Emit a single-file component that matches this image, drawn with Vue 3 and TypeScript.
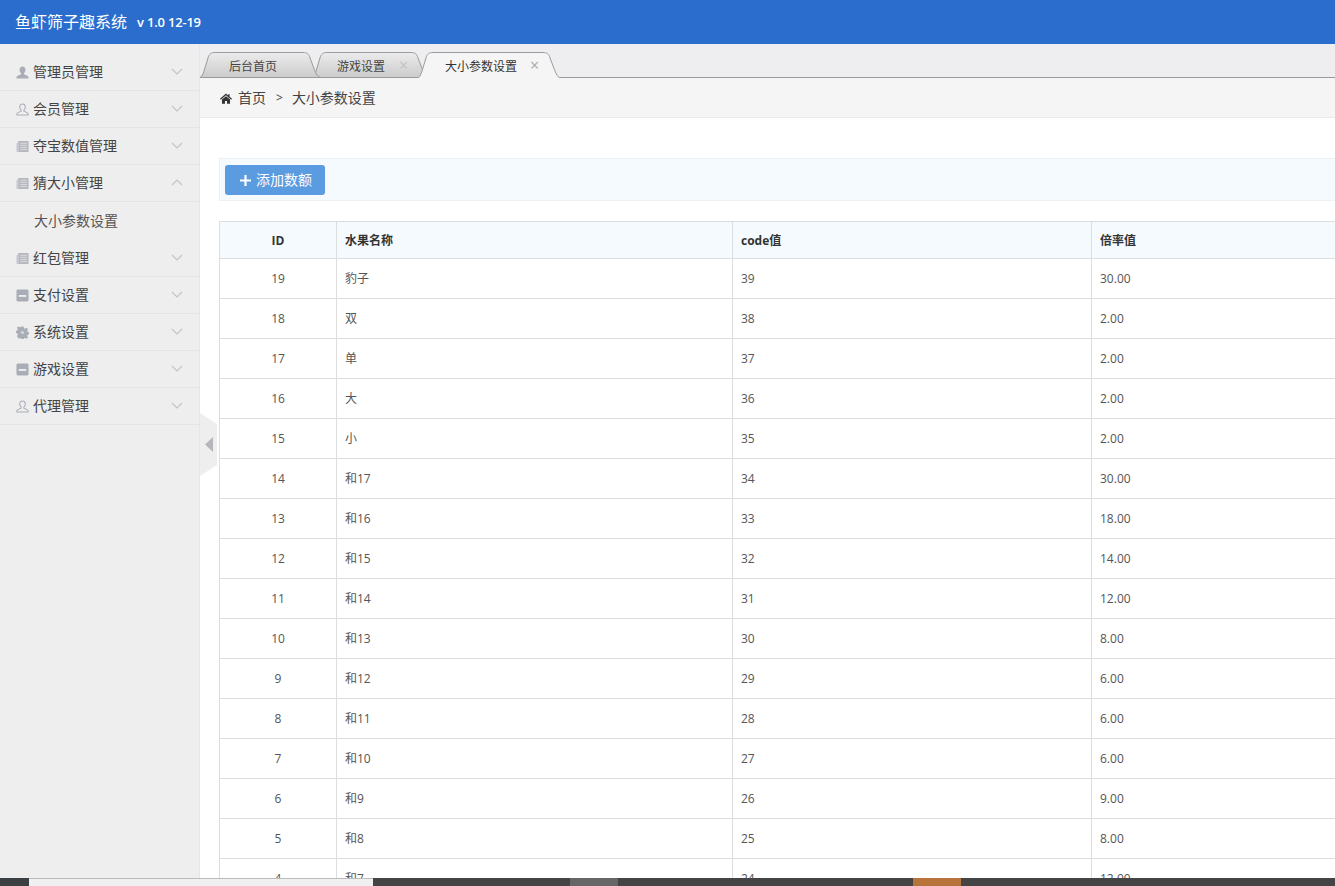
<script setup lang="ts">
type IconName = 'user' | 'outline' | 'news' | 'card' | 'cog'
interface MenuItem { label: string; icon: IconName; open?: boolean; children?: string[] }
const menu: MenuItem[] = [
  { label: '管理员管理', icon: 'user' },
  { label: '会员管理', icon: 'outline' },
  { label: '夺宝数值管理', icon: 'news' },
  { label: '猜大小管理', icon: 'news', open: true, children: ['大小参数设置'] },
  { label: '红包管理', icon: 'news' },
  { label: '支付设置', icon: 'card' },
  { label: '系统设置', icon: 'cog' },
  { label: '游戏设置', icon: 'card' },
  { label: '代理管理', icon: 'outline' },
]
const tabs = [
  { label: '后台首页', width: 120, closable: false, active: false, cls: 'tab-home' },
  { label: '游戏设置', width: 116, closable: true, active: false, cls: 'tab-game' },
  { label: '大小参数设置', width: 142, closable: true, active: true, cls: 'tab-size' },
]
function tabPath(w: number, active: boolean): string {
  const b = active ? 26 : 25.5
  const edge = `M0 ${b} C2 ${b - 1} 3 22 4 19 L8 6 C9 2 11 0.5 15 0.5 L${w - 17} 0.5 C${w - 13} 0.5 ${w - 11} 2 ${w - 10} 6 L${w - 5} 19 C${w - 4} 22 ${w - 2} ${b - 1} ${w} ${b}`
  return active ? edge : edge + ' Z'
}
const rows: [number, string, number, string][] = [
  [19, '豹子', 39, '30.00'], [18, '双', 38, '2.00'], [17, '单', 37, '2.00'], [16, '大', 36, '2.00'],
  [15, '小', 35, '2.00'], [14, '和17', 34, '30.00'], [13, '和16', 33, '18.00'], [12, '和15', 32, '14.00'],
  [11, '和14', 31, '12.00'], [10, '和13', 30, '8.00'], [9, '和12', 29, '6.00'], [8, '和11', 28, '6.00'],
  [7, '和10', 27, '6.00'], [6, '和9', 26, '9.00'], [5, '和8', 25, '8.00'], [4, '和7', 24, '12.00'],
]
</script>

<template>
  <div class="page">
    <header class="topbar">
      <span class="brand">鱼虾筛子趣系统</span>
      <span class="version">v 1.0 12-19</span>
    </header>
    <div class="shell">
      <aside class="sidebar">
        <template v-for="item in menu" :key="item.label">
          <div class="menu-row">
            <svg class="menu-icon" viewBox="0 0 14 14">
              <g v-if="item.icon === 'user'" fill="#a9adb6">
                <path d="M7 .5c2 0 3.2 1.5 3.2 3.6 0 1.5-.7 2.9-1.6 3.6v1.1l3.6 1.6c.9.4 1.3 1 1.3 1.8v1.3H.5v-1.3c0-.8.4-1.4 1.3-1.8l3.6-1.6V7.700C4.500 7 3.800 5.600 3.800 4.100 3.800 2 5 .5 7 .5z" />
              </g>
              <g v-else-if="item.icon === 'outline'" fill="none" stroke="#a9adb6" stroke-width="1.1">
                <path d="M7 1c1.900 0 3 1.400 3 3.200 0 1.400-.6 2.700-1.500 3.400v1.300l3.300 1.500c.9.400 1.300.9 1.300 1.700v.9H.9v-.9c0-.8.400-1.300 1.300-1.700l3.300-1.500V7.600C4.600 6.900 4 5.600 4 4.200 4 2.400 5.100 1 7 1z" />
              </g>
              <g v-else-if="item.icon === 'news'">
                <rect x="2.200" y="1" width="11.300" height="12" rx="1" fill="#b4b7be" />
                <rect x=".5" y="3" width="2.600" height="10" rx=".8" fill="#c8cad0" />
                <path d="M4.500 3.500h7.500M4.500 5.800h7.500M4.500 8.100h7.500M4.500 10.400h7.500" stroke="#dcdde0" stroke-width="1" />
              </g>
              <g v-else-if="item.icon === 'card'">
                <rect x=".5" y=".5" width="13" height="13" rx="1.600" fill="#a9adb6" />
                <rect x="3" y="6.500" width="8" height="2" fill="#eee" />
              </g>
              <g v-else fill="#a9adb6">
                <path d="M5.800 .7h2.400l.4 1.900 1.300.6 1.700-1 1.600 1.600-1 1.700.6 1.300 1.900.4v2.400l-1.900.4-.6 1.300 1 1.700-1.600 1.600-1.700-1-1.300.6-.4 1.900H5.800l-.4-1.900-1.300-.6-1.700 1L.8 11.500l1-1.700-.6-1.300-1.900-.4V5.700l1.900-.4.6-1.300-1-1.700L2.400.7l1.700 1 1.300-.6z" transform="translate(.3 -.2) scale(.96)" />
                <circle cx="7" cy="7" r="1.700" fill="#d4d5d9" />
              </g>
            </svg>
            <span class="menu-label">{{ item.label }}</span>
            <svg class="chevron" viewBox="0 0 12 7">
              <path :d="item.open ? 'M1 6l5-5 5 5' : 'M1 1l5 5 5-5'" fill="none" stroke="#c4c4c4" stroke-width="1.200" />
            </svg>
          </div>
          <div v-for="child in item.children" :key="child" class="submenu-row">{{ child }}</div>
        </template>
      </aside>

      <main class="main">
        <svg class="collapse" viewBox="0 0 18 64">
          <path d="M0 0L17 11V52L0 63z" fill="#eeeeee" />
          <path d="M13 24L5 31.500L13 39z" fill="#b4b6ba" />
        </svg>
        <nav class="tabbar">
          <div
            v-for="tab in tabs"
            :key="tab.label"
            class="tab"
            :class="[tab.cls, { active: tab.active }]"
            :style="{ width: tab.width + 'px' }"
          >
            <svg class="tab-shape" :width="tab.width" height="26" :viewBox="`0 0 ${tab.width} 26`">
              <defs>
                <linearGradient id="tabGrad" x1="0" y1="0" x2="0" y2="1">
                  <stop offset="0" stop-color="#ececec" />
                  <stop offset="1" stop-color="#cbcbcb" />
                </linearGradient>
              </defs>
              <path :d="tabPath(tab.width, tab.active)" :fill="tab.active ? '#f5f5f5' : 'url(#tabGrad)'" stroke="#9a9a9a" />
            </svg>
            <span class="tab-label">{{ tab.label }}</span>
            <span v-if="tab.closable" class="tab-close">×</span>
          </div>
        </nav>
        <div class="crumbs">
          <svg class="home" viewBox="0 0 14 12">
            <path d="M7 .2L0 6.300l1 1.100L7 2.300l6 5.100 1-1.100L11.200 3.900V1H9.500v1.400zM2.300 7.300V12h3.500V8.800h2.400V12h3.500V7.300L7 3.400z" fill="#333" />
          </svg>
          <span class="crumb-text">首页</span>
          <span class="sep">&gt;</span>
          <span class="crumb-text">大小参数设置</span>
        </div>
        <section class="content">
          <div class="toolbar">
            <button class="add-btn" type="button">
              <svg class="plus" viewBox="0 0 12 12"><path d="M6 0v12M0 6h12" stroke="#fff" stroke-width="2.400" /></svg>
              <span class="add-text">添加数额</span>
            </button>
          </div>
          <table class="grid">
            <colgroup>
              <col class="c1" /><col class="c2" /><col class="c3" /><col class="c4" />
            </colgroup>
            <thead>
              <tr><th class="center">ID</th><th>水果名称</th><th>code值</th><th>倍率值</th></tr>
            </thead>
            <tbody>
              <tr v-for="r in rows" :key="r[0]">
                <td class="center">{{ r[0] }}</td><td class="name">{{ r[1] }}</td><td>{{ r[2] }}</td><td>{{ r[3] }}</td>
              </tr>
            </tbody>
          </table>
        </section>
      </main>
    </div>
    <footer class="strip">
      <span class="s-a"></span><span class="s-b"></span><span class="s-c"></span><span class="s-d"></span><span class="s-e"></span><span class="s-f"></span>
    </footer>
  </div>
</template>

<style scoped>
.page {
  width: 1335px;
  height: 886px;
  display: flex;
  flex-direction: column;
  overflow: hidden;
  font-family: "Open Sans", "Noto Sans CJK SC", sans-serif;
  color: #333;
}
.topbar {
  height: 44px;
  flex: none;
  background: #2b6dcd;
  color: #fff;
  display: flex;
  align-items: center;
  padding-left: 15px;
  box-sizing: border-box;
}
.brand { font-size: 16px; padding-bottom: 3px; }
.version { font-size: 13px; font-weight: 600; letter-spacing: -0.2px; margin-left: 10px; }
.shell { flex: 1; min-height: 0; display: flex; }
.sidebar {
  width: 199px;
  flex: none;
  background: #eeeeee;
  border-right: 1px solid #e6e6e6;
  padding-top: 10px;
  box-sizing: content-box;
}
.menu-row {
  height: 36px;
  border-bottom: 1px solid #e4e4e4;
  display: flex;
  align-items: center;
  padding-left: 16px;
  padding-right: 16px;
}
.menu-icon { width: 13px; height: 13px; flex: none; margin-right: 4px; }
.menu-label { font-size: 14px; color: #444; flex: 1; padding-bottom: 2px; }
.chevron { width: 12px; height: 7px; flex: none; margin-top: -1px; }
.submenu-row {
  height: 38px;
  line-height: 38px;
  padding-left: 34px;
  font-size: 14px;
  color: #555;
}
.main {
  flex: 1;
  min-width: 0;
  position: relative;
  display: flex;
  flex-direction: column;
  overflow: hidden;
  background: #fff;
}
.collapse { position: absolute; left: 0; top: 369px; width: 18px; height: 64px; z-index: 2; }
.tabbar {
  height: 34px;
  flex: none;
  box-sizing: border-box;
  background: #eeeef0;
  border-bottom: 1px solid #999;
  display: flex;
  align-items: flex-end;
}
.tab {
  position: relative;
  height: 26px;
  display: flex;
  align-items: center;
  flex: none;
  top: 1px;
}
.tab-home { z-index: 2; margin-right: -8px; }
.tab-game { z-index: 1; margin-right: -10px; }
.tab-size { z-index: 3; }
.tab-shape { position: absolute; left: 0; top: 0; }
.tab-label {
  position: relative;
  font-size: 12px;
  color: #444;
  white-space: nowrap;
  top: 1px;
}
.tab-home .tab-label { margin-left: 29px; }
.tab-game .tab-label { margin-left: 25px; }
.tab-size .tab-label { margin-left: 27px; color: #333; }
.tab-close {
  position: relative;
  font-size: 16px;
  line-height: 1;
  color: #c4c4c4;
  margin-left: 14px;
}
.tab-size .tab-close { color: #aaa; margin-left: 13px; }
.crumbs {
  height: 40px;
  flex: none;
  box-sizing: border-box;
  background: #f5f5f5;
  border-bottom: 1px solid #eaeaea;
  display: flex;
  align-items: center;
  padding-left: 20px;
  font-size: 14px;
  color: #444;
}
.crumb-text { padding-bottom: 2px; }
.home { width: 12px; height: 11px; margin-right: 6px; margin-top: 1px; }
.sep { margin: 0 9px 0 10px; font-size: 12px; }
.content { padding: 40px 0 0 19px; }
.toolbar {
  width: 1200px;
  height: 43px;
  box-sizing: border-box;
  background: #f5fafe;
  border: 1px solid #eef1f3;
  padding: 6px 0 0 5px;
}
.add-btn {
  width: 100px;
  height: 30px;
  border: 0;
  border-radius: 3px;
  background: #5b9bdf;
  color: #fff;
  font: inherit;
  font-size: 14px;
  display: flex;
  align-items: center;
  padding: 0 0 0 15px;
}
.add-text { padding-bottom: 2px; }
.plus { width: 11px; height: 11px; margin-right: 5px; }
.grid {
  margin-top: 20px;
  table-layout: fixed;
  width: 1200px;
  border-collapse: collapse;
  font-size: 12px;
  color: #555;
}
.c1 { width: 117px; }
.c2 { width: 396px; }
.c3 { width: 359px; }
th, td {
  border: 1px solid #ddd;
  padding: 0 8px;
  text-align: left;
  font-weight: 400;
}
th {
  height: 37px;
  box-sizing: border-box;
  background: #f5fafe;
  font-weight: 700;
  color: #333;
}
td { height: 40px; box-sizing: border-box; }
td.name { padding-bottom: 2px; }
.center { text-align: center; }
.strip {
  height: 8px;
  flex: none;
  display: flex;
  position: relative;
  z-index: 3;
  background: #444;
}
.s-a { width: 29px; background: #3d4043; }
.s-b { width: 344px; background: #f0f0f0; border-top: 1px solid #bbb; box-sizing: border-box; }
.s-c { width: 197px; }
.s-d { width: 48px; background: #666; }
.s-e { width: 295px; }
.s-f { width: 48px; background: #b8733a; }
</style>

<style>
html, body { margin: 0; overflow: hidden; background: #fff; }
</style>
